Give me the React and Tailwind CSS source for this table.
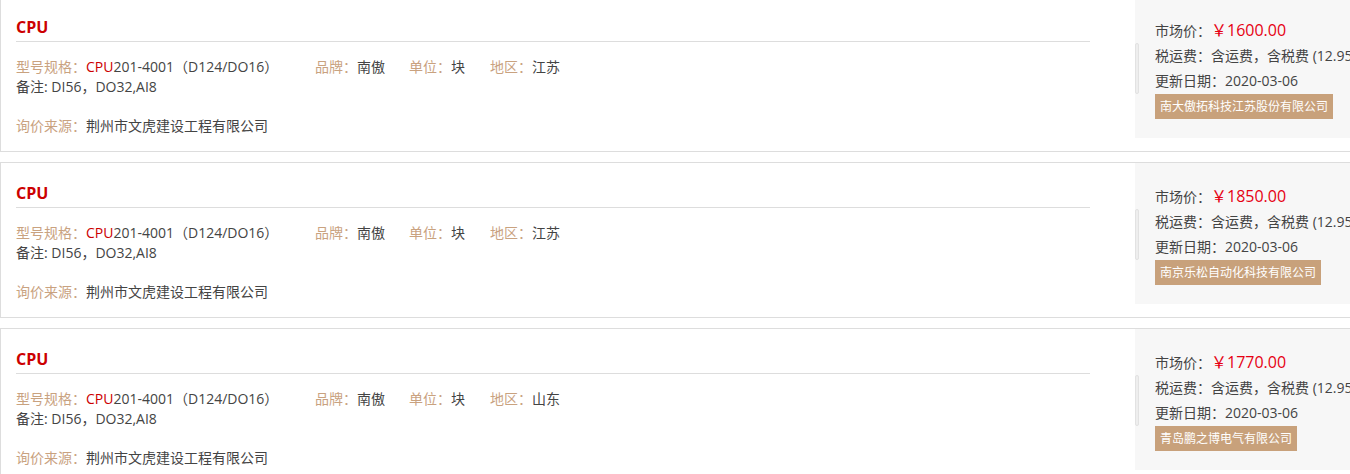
import React from "react";

const items = [
  { price: "1600.00", region: "江苏", company: "南大傲拓科技江苏股份有限公司" },
  { price: "1850.00", region: "江苏", company: "南京乐松自动化科技有限公司" },
  { price: "1770.00", region: "山东", company: "青岛鹏之博电气有限公司" },
];

function Card({ price, region, company }) {
  return (
    <div className="flex items-start w-[1420px] h-[156px] border border-[#dddddd] bg-white mb-[10px] shrink-0">
      <div className="w-[1089px] pl-[15px] pt-[15px] shrink-0">
        <div className="h-[30px] leading-[30px] text-[16px] font-bold text-[#cc0000] border-b border-[#dddddd]">
          CPU
        </div>
        <div className="mt-[15px] flex h-[20px] leading-[20px] text-[14px] whitespace-nowrap">
          <div className="w-[299px] shrink-0">
            <span className="text-[#c9a27f]">型号规格：</span>
            <span className="text-[#cc0000]">CPU</span>
            <span className="text-[#444444]">201-4001（D124/DO16）</span>
          </div>
          <div className="w-[94px] shrink-0">
            <span className="text-[#c9a27f]">品牌：</span>
            <span className="text-[#444444]">南傲</span>
          </div>
          <div className="w-[81px] shrink-0">
            <span className="text-[#c9a27f]">单位：</span>
            <span className="text-[#444444]">块</span>
          </div>
          <div className="shrink-0">
            <span className="text-[#c9a27f]">地区：</span>
            <span className="text-[#444444]">{region}</span>
          </div>
        </div>
        <div className="h-[19px] leading-[19px] text-[14px] text-[#444444] whitespace-nowrap">
          备注: DI56，DO32,AI8
        </div>
        <div className="mt-[20px] h-[20px] leading-[20px] text-[14px] whitespace-nowrap">
          <span className="text-[#c9a27f]">询价来源：</span>
          <span className="text-[#444444]">荆州市文虎建设工程有限公司</span>
        </div>
      </div>
      <div className="relative ml-[45px] w-[280px] h-[141px] bg-[#f7f7f7] pl-[20px] pt-[20px] shrink-0">
        <div className="absolute left-0 top-[46px] w-[4px] h-[51px] rounded-[2px] bg-[#eeeeee] border border-[#e2e2e2]" />
        <div className="h-[26px] leading-[26px] text-[14px] text-[#444444] whitespace-nowrap">
          市场价：<span className="text-[#e60012] text-[16px]">￥{price}</span>
        </div>
        <div className="h-[26px] leading-[26px] text-[14px] text-[#444444] whitespace-nowrap">
          税运费：含运费，含税费 (12.95%)
        </div>
        <div className="h-[24px] leading-[24px] text-[14px] text-[#444444] whitespace-nowrap">
          更新日期：2020-03-06
        </div>
        <div className="inline-block h-[25px] leading-[25px] px-[5px] bg-[#c8a17b] text-white text-[12px] whitespace-nowrap">
          {company}
        </div>
      </div>
    </div>
  );
}

export default function App() {
  return (
    <div
      className="w-[1350px] h-[474px] overflow-hidden bg-white"
      style={{ fontFamily: '"Open Sans", "Noto Sans CJK SC", sans-serif' }}
    >
      <div className="mt-[-4px] flex flex-col">
        {items.map((it, i) => (
          <Card key={i} {...it} />
        ))}
      </div>
    </div>
  );
}
